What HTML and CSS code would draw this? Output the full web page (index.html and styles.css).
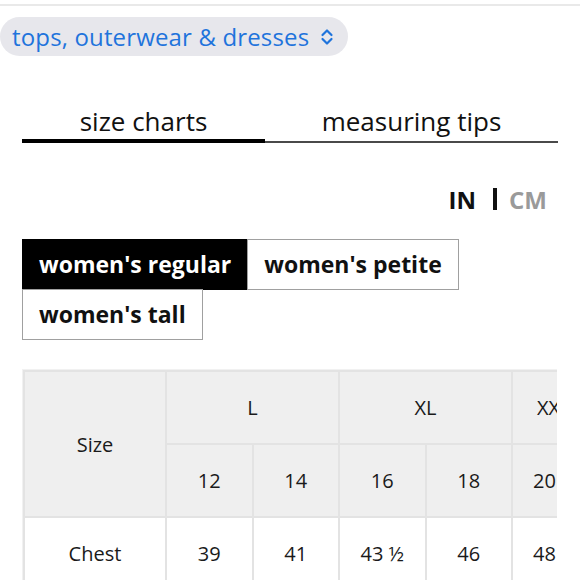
FILE: index.html
```html
<!DOCTYPE html>
<html>
<head>
<meta charset="utf-8">
<link rel="stylesheet" href="styles.css">
</head>
<body>
<div class="topbar"></div>
<div class="picker">
  <span class="pill">tops, outerwear &amp; dresses
    <svg class="updown" width="14" height="18" viewBox="0 0 14 18"><path d="M2.5 7 L7 2.5 L11.5 7 M2.5 11 L7 15.5 L11.5 11" fill="none" stroke="#1f74dc" stroke-width="2.2" stroke-linecap="round" stroke-linejoin="round"/></svg>
  </span>
</div>
<div class="tabs">
  <div class="tab active">size charts</div>
  <div class="tab">measuring tips</div>
</div>
<div class="units">
  <span class="unit on">IN</span>
  <span class="sep"></span>
  <span class="unit off">CM</span>
</div>
<div class="fits">
  <div class="fit selected">women's regular</div>
  <div class="fit">women's petite</div>
  <div class="fit">women's tall</div>
</div>
<div class="tablewrap">
  <table class="chart">
    <tr class="head">
      <th class="first" rowspan="2">Size</th>
      <th colspan="2">L</th>
      <th colspan="2">XL</th>
      <th class="last xxl">XXL</th>
    </tr>
    <tr class="head">
      <th>12</th><th>14</th><th>16</th><th>18</th><th class="last">20</th>
    </tr>
    <tr>
      <td class="first">Chest</td>
      <td>39</td><td>41</td><td>43 ½</td><td>46</td><td class="last">48</td>
    </tr>
  </table>
</div>
</body>
</html>
```
FILE: styles.css
```css
* { box-sizing: border-box; }
html, body { margin: 0; padding: 0; background: #fff; }
body { width: 580px; height: 580px; overflow: hidden; font-family: "Open Sans", "Noto Sans", sans-serif; color: #111; }

.topbar { height: 6px; border-bottom: 2px solid #e9e9e9; }

.picker { padding-top: 11px; }
.pill {
  display: inline-flex; align-items: center; gap: 11px;
  height: 39px; padding: 0 14px 0 12px;
  background: #e7e7ec; border-radius: 20px;
  color: #1f74dc; font-size: 24px; letter-spacing: 0.15px;
}
.updown { margin-top: 1px; }

.tabs {
  display: flex; margin: 43px 22px 0 22px;
  border-bottom: 2px solid #4a4a4a;
}
.tab {
  text-align: center; font-size: 26px; color: #111;
  height: 42px; line-height: 44px;
}
.tab:first-child { width: 243px; }
.tab:last-child { flex: 1; }
.tab.active { position: relative; }
.tab.active::after { content: ""; position: absolute; left: 0; right: 0; bottom: -2px; height: 4px; background: #000; }

.units {
  display: flex; justify-content: flex-end; align-items: center;
  margin: 42px 33px 0 0; height: 28px; font-weight: 700; font-size: 24px;
}
.unit.on { color: #111; }
.unit.off { color: #9a9a9a; }
.sep { width: 4px; height: 22px; background: #111; margin: 0 12px 0 17px; }

.fits {
  display: flex; flex-wrap: wrap; width: 460px;
  margin: 26px 0 0 22px;
}
.fit {
  height: 51px; line-height: 49px; padding: 0 16px;
  border: 1px solid #a0a0a0; font-weight: 700; font-size: 23px; color: #111;
  background: #fff;
}
.fit + .fit { margin-left: -1px; }
.fit:nth-child(3) { margin-left: 0; margin-top: -1px; }
.fit.selected { background: #000; color: #fff; border-color: #000; }

.tablewrap {
  margin: 29px 0 0 22px; width: 535px; overflow: hidden;
  border-top: 1px solid #f1f1f1; border-left: 1px solid #f1f1f1;
}
.chart { border-collapse: collapse; font-size: 20px; color: #1a1a1a; table-layout: fixed; }
.chart th, .chart td {
  border: 2px solid #e3e3e3; text-align: center; font-weight: 400;
  width: 86.5px; min-width: 86.5px; height: 73px; padding: 0;
}
.chart .head th { background: #efefef; }
.chart .first {
  width: 142px; min-width: 142px; position: relative; z-index: 1;
  box-shadow: 8px 0 10px -6px rgba(0,0,0,0.18);
}
.chart th.first { background: #efefef; }
.chart td.first { background: #fff; }
.chart td { background: #fff; }
.chart .last { width: 60px; min-width: 60px; white-space: nowrap; text-align: left; padding-left: 20px; }
.chart th.xxl { padding-left: 24px; }
```
